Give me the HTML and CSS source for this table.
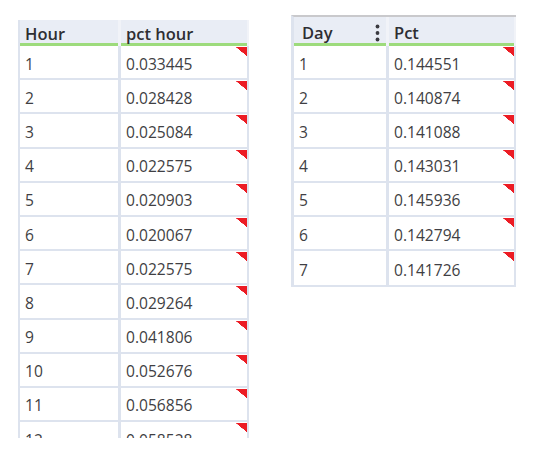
FILE: index.html
```html
<!DOCTYPE html>
<html>
<head>
<meta charset="utf-8">
<link rel="stylesheet" href="styles.css">
</head>
<body>
<div class="page">
  <div class="table left">
    <div class="grid grid-left">
      <div class="cell head">Hour</div>
      <div class="cell head">pct hour</div>
      <div class="cell">1</div><div class="cell val">0.033445</div>
      <div class="cell">2</div><div class="cell val">0.028428</div>
      <div class="cell">3</div><div class="cell val">0.025084</div>
      <div class="cell">4</div><div class="cell val">0.022575</div>
      <div class="cell">5</div><div class="cell val">0.020903</div>
      <div class="cell">6</div><div class="cell val">0.020067</div>
      <div class="cell">7</div><div class="cell val">0.022575</div>
      <div class="cell">8</div><div class="cell val">0.029264</div>
      <div class="cell">9</div><div class="cell val">0.041806</div>
      <div class="cell">10</div><div class="cell val">0.052676</div>
      <div class="cell">11</div><div class="cell val">0.056856</div>
      <div class="cell">12</div><div class="cell val">0.058528</div>
    </div>
  </div>
  <div class="table right">
    <div class="grid grid-right">
      <div class="cell head head-r head-day"><span>Day</span>
        <svg class="dots" width="5" height="18" viewBox="0 0 5 18"><circle cx="2.5" cy="2.5" r="1.9"/><circle cx="2.5" cy="9" r="1.9"/><circle cx="2.5" cy="15.5" r="1.9"/></svg>
      </div>
      <div class="cell head head-r">Pct</div>
      <div class="cell">1</div><div class="cell val">0.144551</div>
      <div class="cell">2</div><div class="cell val">0.140874</div>
      <div class="cell">3</div><div class="cell val">0.141088</div>
      <div class="cell">4</div><div class="cell val">0.143031</div>
      <div class="cell">5</div><div class="cell val">0.145936</div>
      <div class="cell">6</div><div class="cell val">0.142794</div>
      <div class="cell">7</div><div class="cell val">0.141726</div>
    </div>
  </div>
</div>
</body>
</html>
```
FILE: styles.css
```css
* { box-sizing: border-box; }
html, body { margin: 0; padding: 0; background: #ffffff; }
body {
  font-family: "Open Sans", "Noto Sans", sans-serif;
  font-size: 15.6px;
  color: #3f3f44;
}
.page {
  display: flex;
  align-items: flex-start;
  padding-left: 18px;
}
.table.left {
  margin-top: 20px;
  width: 231px;
  height: 418px;
  overflow: hidden;
}
.table.right {
  margin-left: 42px;
  margin-top: 15px;
  width: 225px;
}
.grid {
  display: grid;
  grid-auto-rows: 34.2px;
}
.grid-left {
  grid-template-columns: 101px 128px;
  border-left: 2px solid #dde3ee;
  grid-template-rows: 26px;
}
.grid-right {
  grid-template-columns: 95px 127px;
  border-left: 3px solid #dde3ee;
  border-top: 2px solid #c9c9cc;
  border-bottom: 2px solid #dde3ee;
  grid-template-rows: 29px;
}
.cell {
  display: flex;
  align-items: center;
  padding: 3px 5px 0 5px;
  background: #ffffff;
  border-right: 3px solid #dde3ee;
  border-bottom: 2px solid #dde3ee;
  white-space: nowrap;
}
.cell:nth-child(2n) { border-right-width: 2px; }
.grid-right .cell:nth-last-child(-n+2) { border-bottom: 0; }
.val {
  background:
    linear-gradient(to bottom left, #ec1c24 50%, transparent 52%) top 1px right 0 / 11px 9px no-repeat,
    #ffffff;
}
.head {
  font-size: 16.5px;
  font-weight: 600;
  color: #2e2e33;
  padding-top: 0;
  border-bottom: 0;
  background:
    linear-gradient(#9ddb7c, #9ddb7c) bottom / 100% 3px no-repeat,
    #e9edf5;
  border-right-color: #f1f3f8;
}
.head-r { padding-top: 2px; }
.head-day {
  justify-content: space-between;
  padding-right: 6px;
  padding-left: 8px;
}
.dots { fill: #3a3a40; margin-bottom: -1px; }
```
